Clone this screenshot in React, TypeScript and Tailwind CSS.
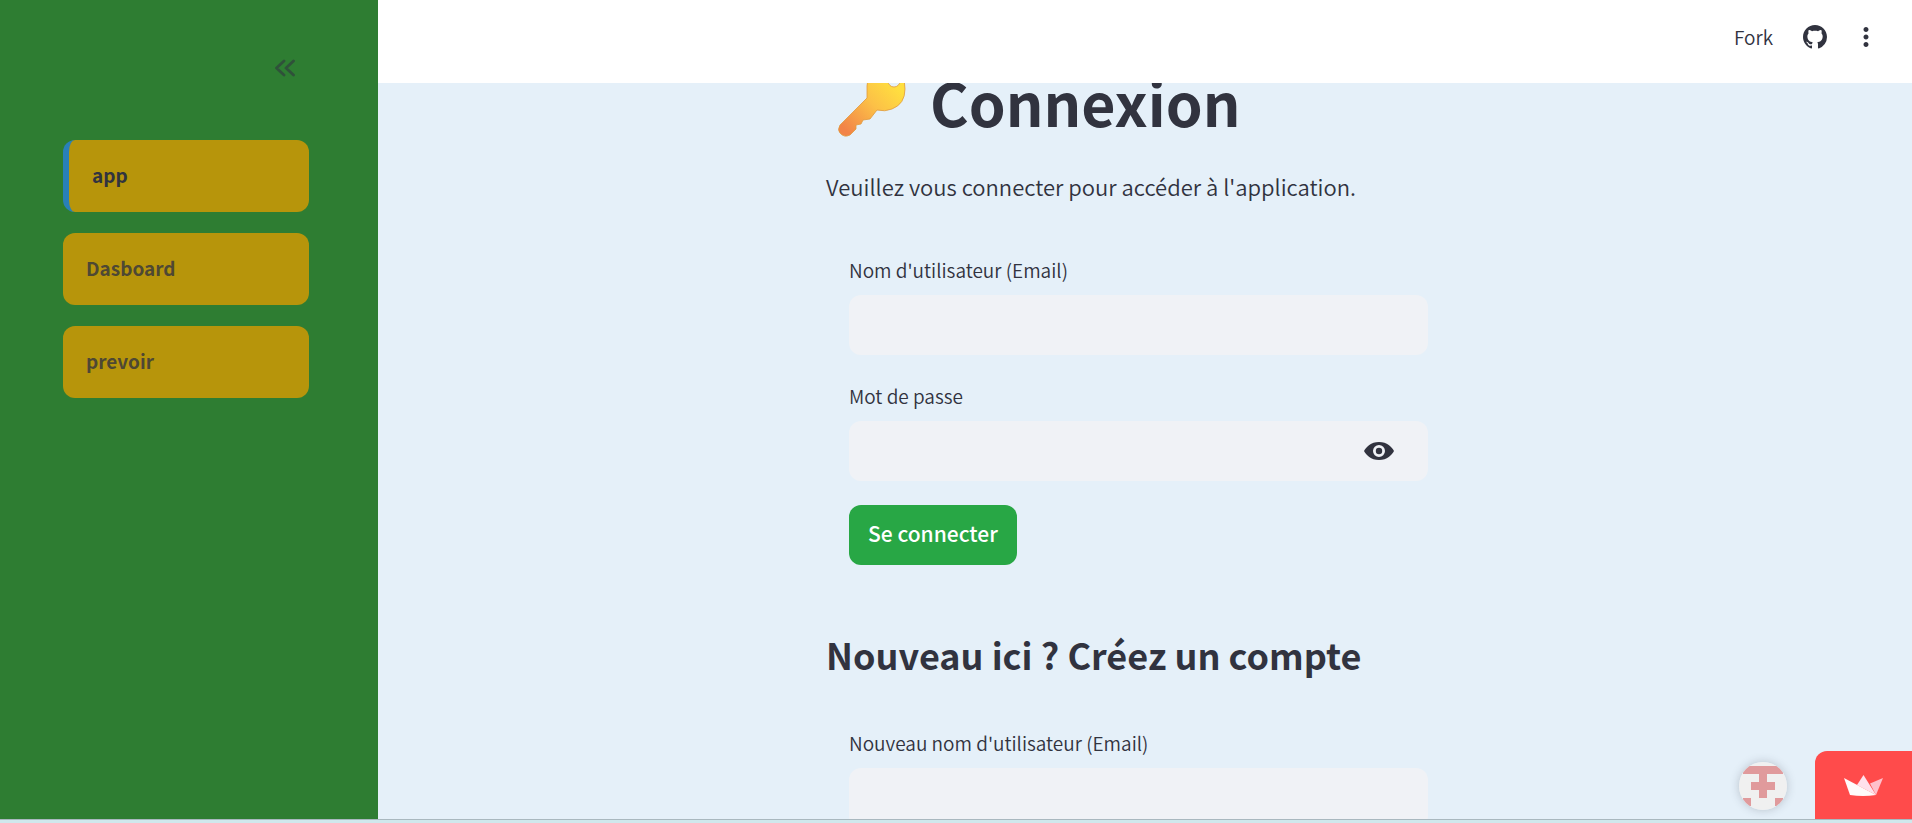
import React, { useState } from 'react';
import { MdVisibilityOff, MdMoreVert } from 'react-icons/md';

const pages = ['app', 'Dasboard', 'prevoir'];

const NavItem: React.FC<{ label: string; isActive: boolean }> = ({ label, isActive }) => (
    <a
        href={`#${label}`}
        className={`flex h-[72px] items-center rounded-xl bg-[#b7950b] px-[23px] pb-[2px] text-[19px] font-bold ${
            isActive ? 'border-l-[6px] border-[#2980b9] text-[#31333f]' : 'text-[#31333f]/80'
        }`}
    >
        {label}
    </a>
);

const Field: React.FC<{ id: string; label: string; type?: string; children?: React.ReactNode }> = ({
    id,
    label,
    type = 'text',
    children,
}) => (
    <div className="flex flex-col gap-[6px]">
        <label htmlFor={id} className="flex h-9 items-center pb-[2px] text-[19px]">
            {label}
        </label>
        <div className="flex h-[60px] items-center rounded-xl bg-[#f0f2f6]">
            <input id={id} type={type} className="h-full min-w-0 flex-1 bg-transparent px-4 text-[21px] outline-none" />
            {children}
        </div>
    </div>
);

const KeyIcon = () => (
    <svg className="h-20 w-20" viewBox="0 0 80 80" aria-hidden="true">
        <defs>
            <linearGradient id="key" x1="0.85" y1="0.25" x2="0.15" y2="0.95">
                <stop offset="0" stopColor="#ffdf3f" />
                <stop offset="0.45" stopColor="#fcc047" />
                <stop offset="1" stopColor="#f28448" />
            </linearGradient>
        </defs>
        <path
            fill="url(#key)"
            stroke="#e09a3c"
            strokeWidth="0.8"
            fillRule="evenodd"
            d="M51 5q-18 1-18 19v12L6 63q-3 5 0 8 4 5 10 2l6-6v-4l5-1 2-4 7-1 7-9q8 2 15-1 13-5 13-20 0-22-14-22zm9 8a6 6 0 1 1 0 12 6 6 0 0 1 0-12z"
        />
    </svg>
);

const EyeIcon = () => (
    <svg className="h-[18px] w-[30px]" viewBox="0 0 30 18" fill="currentColor" aria-hidden="true">
        <path
            fillRule="evenodd"
            d="M15 0C7 0 2 5 0 9c2 4 7 9 15 9s13-5 15-9c-2-4-7-9-15-9zm0 3a6 6 0 1 1 0 12 6 6 0 0 1 0-12z"
        />
        <circle cx="15" cy="9" r="3.200" />
    </svg>
);

export default function App() {
    const [showPassword, setShowPassword] = useState(false);

    return (
        <div className="flex h-screen flex-col bg-[#cfe8ec] font-['Noto_Sans_CJK_SC',sans-serif] font-[350] text-[#31333f]">
            <div className="flex min-h-0 flex-1 border-b border-[#a9b8bf]">
                <aside className="w-[378px] shrink-0 bg-[#2e7d32] pr-[69px] pl-[63px]">
                    <div className="flex h-[140px] items-start justify-end pt-[59px] pr-[14px]">
                        <button aria-label="Replier le menu" className="text-[#31333f]/60">
                            <svg
                                className="h-[18px] w-5"
                                viewBox="0 0 20 18"
                                fill="none"
                                stroke="currentColor"
                                strokeWidth="2.800"
                                strokeLinecap="round"
                                strokeLinejoin="round"
                            >
                                <path d="M9 2 1.500 9 9 16M18.500 2 11 9l7.500 7" />
                            </svg>
                        </button>
                    </div>
                    <nav className="flex flex-col gap-[21px]">
                        {pages.map((page) => (
                            <NavItem key={page} label={page} isActive={page === 'app'} />
                        ))}
                    </nav>
                </aside>

                <div className="relative flex min-w-0 flex-1 flex-col bg-[#e5f0f9]">
                    <header className="flex h-[83px] shrink-0 items-start justify-end gap-6 bg-white pt-[22px] pr-[31px]">
                        <button className="mr-[6px] text-[19px] leading-[30px]">Fork</button>
                        <button aria-label="GitHub" className="pt-[3px]">
                            <svg className="h-6 w-6" viewBox="0 0 16 16" fill="currentColor">
                                <path d="M8 0C3.58 0 0 3.58 0 8c0 3.54 2.29 6.53 5.47 7.59.4.07.55-.17.55-.38 0-.19-.01-.82-.01-1.49-2.01.37-2.53-.49-2.69-.94-.09-.23-.48-.94-.82-1.13-.28-.15-.68-.52-.01-.53.63-.01 1.08.58 1.23.82.72 1.21 1.87.87 2.33.66.07-.52.28-.87.51-1.07-1.78-.2-3.64-.89-3.64-3.95 0-.87.31-1.59.82-2.15-.08-.2-.36-1.02.08-2.12 0 0 .67-.21 2.2.82.64-.18 1.32-.27 2-.27s1.36.09 2 .27c1.53-1.04 2.2-.82 2.2-.82.44 1.1.16 1.92.08 2.12.51.56.82 1.27.82 2.15 0 3.07-1.87 3.75-3.65 3.95.29.25.54.73.54 1.48 0 1.07-.01 1.93-.01 2.2 0 .21.15.46.55.38A8.01 8.01 0 0 0 16 8c0-4.42-3.58-8-8-8z" />
                            </svg>
                        </button>
                        <button aria-label="Menu">
                            <MdMoreVert className="h-[30px] w-[30px]" />
                        </button>
                    </header>

                    <main className="min-h-0 flex-1 overflow-hidden pr-[13px]">
                        <div className="mx-auto -mt-[23px] w-[625px] max-w-full">
                            <h1 className="flex h-[84px] items-center gap-4 pl-2 text-[59px] leading-[84px] font-bold">
                                <KeyIcon />
                                Connexion
                            </h1>
                            <p className="mt-6 flex h-9 items-center text-[22px]">
                                Veuillez vous connecter pour accéder à l'application.
                            </p>

                            <form className="mt-[49px] flex flex-col gap-6 px-[23px]" onSubmit={(e) => e.preventDefault()}>
                                <Field id="email" label="Nom d'utilisateur (Email)" />
                                <Field id="password" label="Mot de passe" type={showPassword ? 'text' : 'password'}>
                                    <button
                                        type="button"
                                        aria-label="Afficher le mot de passe"
                                        className="mr-[34px]"
                                        onClick={() => setShowPassword(!showPassword)}
                                    >
                                        {showPassword ? <MdVisibilityOff className="h-8 w-8" /> : <EyeIcon />}
                                    </button>
                                </Field>
                                <button className="h-[60px] self-start rounded-xl bg-[#28a745] px-[19px] pb-[2px] text-[21px] font-medium text-white">
                                    Se connecter
                                </button>
                            </form>

                            <h2 className="mt-[59px] flex h-[60px] items-center text-[36px] font-bold">
                                Nouveau ici ? Créez un compte
                            </h2>
                            <form className="mt-[42px] px-[23px]" onSubmit={(e) => e.preventDefault()}>
                                <Field id="new-email" label="Nouveau nom d'utilisateur (Email)" />
                            </form>
                        </div>
                    </main>

                    <div className="absolute right-0 bottom-0 flex items-end gap-7">
                        <a href="#profile" aria-label="Profil" className="mb-[9px] rounded-full shadow-[0_0_10px_rgba(49,51,63,0.25)]">
                            <svg className="h-12 w-12 rounded-full bg-[#f0f0f0]" viewBox="0 0 48 48" fill="#e09a9c">
                                <path d="M4 4h40v8H28v8h8v8h-8v8h-8v-8h-8v-8h8v-8H4zM4 36h8v8H4zM36 36h8v8h-8z" />
                            </svg>
                        </a>
                        <a
                            href="#streamlit"
                            aria-label="Streamlit"
                            className="flex h-[68px] w-[97px] items-center justify-center rounded-tl-xl bg-[#ff4b4b]"
                        >
                            <svg className="h-[21px] w-[39px]" viewBox="0 0 39 21">
                                <path fill="#ffc0cb" d="M39 3 26 8.5 32 20z" />
                                <path fill="#ffe1ec" d="M19.500 0 13 10l19 10z" />
                                <path fill="#fffafa" d="M0 3l32 17q-13 2-26 0z" />
                            </svg>
                        </a>
                    </div>
                </div>
            </div>
            <div className="h-[3px] shrink-0" />
        </div>
    );
}
